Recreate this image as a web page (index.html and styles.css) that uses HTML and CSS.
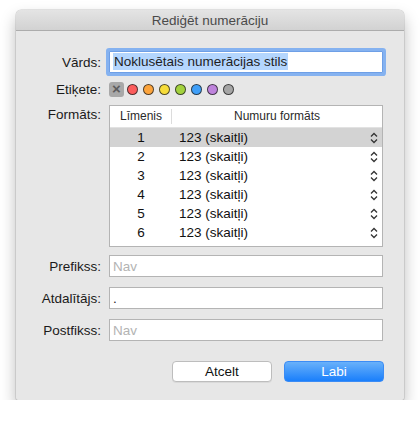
FILE: index.html
```html
<!DOCTYPE html>
<html lang="lv">
<head>
<meta charset="utf-8">
<title>Rediģēt numerāciju</title>
<link rel="stylesheet" href="styles.css">
</head>
<body>
<div class="window">
  <div class="titlebar">Rediģēt numerāciju</div>
  <div class="form">
    <div class="row row-name">
      <label class="label">Vārds:</label>
      <div class="field field-focus"><span class="selected">Noklusētais numerācijas stils</span></div>
    </div>
    <div class="row row-tags">
      <label class="label">Etiķete:</label>
      <div class="tags">
        <span class="tag-none">×</span>
        <span class="dot dot-red"></span>
        <span class="dot dot-orange"></span>
        <span class="dot dot-yellow"></span>
        <span class="dot dot-green"></span>
        <span class="dot dot-blue"></span>
        <span class="dot dot-purple"></span>
        <span class="dot dot-gray"></span>
      </div>
    </div>
    <div class="row row-table">
      <label class="label label-top">Formāts:</label>
      <div class="table">
        <div class="thead">
          <div class="th th-level">Līmenis</div>
          <div class="th th-format">Numuru formāts</div>
        </div>
        <div class="tr tr-selected"><div class="td-level">1</div><div class="td-format">123 (skaitļi)</div><svg class="stepper" viewBox="0 0 8 12" width="8" height="12"><path d="M1 4.5 L4 1.5 L7 4.5 M1 7.5 L4 10.5 L7 7.5" fill="none" stroke="#333" stroke-width="1.3"/></svg></div>
        <div class="tr"><div class="td-level">2</div><div class="td-format">123 (skaitļi)</div><svg class="stepper" viewBox="0 0 8 12" width="8" height="12"><path d="M1 4.5 L4 1.5 L7 4.5 M1 7.5 L4 10.5 L7 7.5" fill="none" stroke="#333" stroke-width="1.3"/></svg></div>
        <div class="tr"><div class="td-level">3</div><div class="td-format">123 (skaitļi)</div><svg class="stepper" viewBox="0 0 8 12" width="8" height="12"><path d="M1 4.5 L4 1.5 L7 4.5 M1 7.5 L4 10.5 L7 7.5" fill="none" stroke="#333" stroke-width="1.3"/></svg></div>
        <div class="tr"><div class="td-level">4</div><div class="td-format">123 (skaitļi)</div><svg class="stepper" viewBox="0 0 8 12" width="8" height="12"><path d="M1 4.5 L4 1.5 L7 4.5 M1 7.5 L4 10.5 L7 7.5" fill="none" stroke="#333" stroke-width="1.3"/></svg></div>
        <div class="tr"><div class="td-level">5</div><div class="td-format">123 (skaitļi)</div><svg class="stepper" viewBox="0 0 8 12" width="8" height="12"><path d="M1 4.5 L4 1.5 L7 4.5 M1 7.5 L4 10.5 L7 7.5" fill="none" stroke="#333" stroke-width="1.3"/></svg></div>
        <div class="tr"><div class="td-level">6</div><div class="td-format">123 (skaitļi)</div><svg class="stepper" viewBox="0 0 8 12" width="8" height="12"><path d="M1 4.5 L4 1.5 L7 4.5 M1 7.5 L4 10.5 L7 7.5" fill="none" stroke="#333" stroke-width="1.3"/></svg></div>
      </div>
    </div>
    <div class="row row-prefix">
      <label class="label">Prefikss:</label>
      <div class="field"><span class="placeholder">Nav</span></div>
    </div>
    <div class="row row-sep">
      <label class="label">Atdalītājs:</label>
      <div class="field">.</div>
    </div>
    <div class="row row-suffix">
      <label class="label">Postfikss:</label>
      <div class="field"><span class="placeholder">Nav</span></div>
    </div>
    <div class="buttons">
      <button class="btn btn-cancel">Atcelt</button>
      <button class="btn btn-ok">Labi</button>
    </div>
  </div>
</div>
</body>
</html>
```
FILE: styles.css
```css
html, body {
  margin: 0;
  padding: 0;
  background: #ffffff;
}
body {
  font-family: "Liberation Sans", Arial, sans-serif;
  font-size: 13.5px;
  color: #1e1e1e;
}
.window {
  margin: 10px 0 0 16px;
  width: 388px;
  height: 390px;
  background: #e7e7e7;
  border-radius: 5px 5px 2px 2px;
  box-shadow: 0 8px 16px rgba(0, 0, 0, 0.28), 0 0 0 0.5px rgba(0, 0, 0, 0.18);
  overflow: hidden;
}
.titlebar {
  height: 20px;
  line-height: 21px;
  text-align: center;
  color: #4a4a4a;
  background: linear-gradient(#e4e4e4, #d2d2d2);
  border-bottom: 1px solid #acacac;
}
.form {
  display: flex;
  flex-direction: column;
  padding-top: 20px;
}
.row {
  display: flex;
  align-items: center;
}
.label {
  width: 85px;
  text-align: right;
  margin-right: 8px;
  color: #1a1a1a;
  white-space: nowrap;
}
.label-top {
  align-self: flex-start;
  padding-top: 2px;
}
.field {
  box-sizing: border-box;
  width: 274px;
  height: 22px;
  background: #fff;
  border: 1px solid #b4b4b4;
  padding: 0 3px;
  line-height: 21px;
  font-size: 13.5px;
  white-space: nowrap;
}
.field-focus {
  font-size: 13.5px;
  line-height: 20px;
  box-shadow: 0 0 0 3px #85b2f0;
  border-color: #6e9fe6;
  border-radius: 1px;
}
.selected {
  background: #b4d6fe;
  padding: 1px 1px;
}
.placeholder {
  color: #b3b3b3;
}
.row-tags {
  margin-top: 9px;
  height: 15px;
}
.tags {
  display: flex;
  align-items: center;
  gap: 5px;
}
.tag-none {
  width: 15px;
  height: 15px;
  border-radius: 3px;
  background: #a8a8a8;
  color: #5c5c5c;
  font-size: 15px;
  line-height: 14px;
  text-align: center;
  font-weight: bold;
  margin-right: -2px;
}
.dot {
  box-sizing: border-box;
  width: 11px;
  height: 11px;
  border-radius: 50%;
  border: 1px solid rgba(30, 30, 30, 0.75);
}
.dot-red { background: #fb5c5c; }
.dot-orange { background: #fca43c; }
.dot-yellow { background: #f6dc3a; }
.dot-green { background: #a3d23e; }
.dot-blue { background: #3f9ff8; }
.dot-purple { background: #be83dc; }
.dot-gray { background: #a5a5a5; }
.row-table {
  margin-top: 8px;
  align-items: flex-start;
}
.table {
  box-sizing: border-box;
  width: 274px;
  height: 142px;
  background: #fff;
  border: 1px solid #b4b4b4;
}
.thead {
  display: flex;
  height: 21px;
  border-bottom: 1px solid #e2e2e2;
  color: #2a2a2a;
  font-size: 12px;
}
.th {
  line-height: 21px;
  text-align: center;
}
.th-level {
  width: 62px;
  position: relative;
}
.th-level::after {
  content: "";
  position: absolute;
  right: 0;
  top: 3px;
  bottom: 3px;
  width: 1px;
  background: #dcdcdc;
}
.th-format {
  flex: 1;
}
.tr {
  display: flex;
  align-items: center;
  height: 19px;
  font-size: 13.5px;
  color: #111;
}
.tr-selected {
  background: #d3d3d3;
}
.td-level {
  width: 62px;
  text-align: center;
}
.td-format {
  flex: 1;
  padding-left: 7px;
}
.stepper {
  margin-right: 4px;
}
.row-prefix {
  margin-top: 8px;
}
.row-sep,
.row-suffix {
  margin-top: 10px;
}
.buttons {
  display: flex;
  justify-content: flex-end;
  gap: 12px;
  margin-top: 20px;
  padding-right: 20px;
}
.btn {
  box-sizing: border-box;
  width: 100px;
  height: 21px;
  border-radius: 4px;
  font-family: "Liberation Sans", Arial, sans-serif;
  font-size: 13.5px;
  padding: 0;
}
.btn-cancel {
  background: #fff;
  border: 1px solid #bdbdbd;
  color: #111;
  box-shadow: 0 1px 0 rgba(0, 0, 0, 0.06);
}
.btn-ok {
  background: linear-gradient(#69b1fa, #1a7ffb);
  border: 1px solid #3b8cf5;
  color: #fff;
}
```
